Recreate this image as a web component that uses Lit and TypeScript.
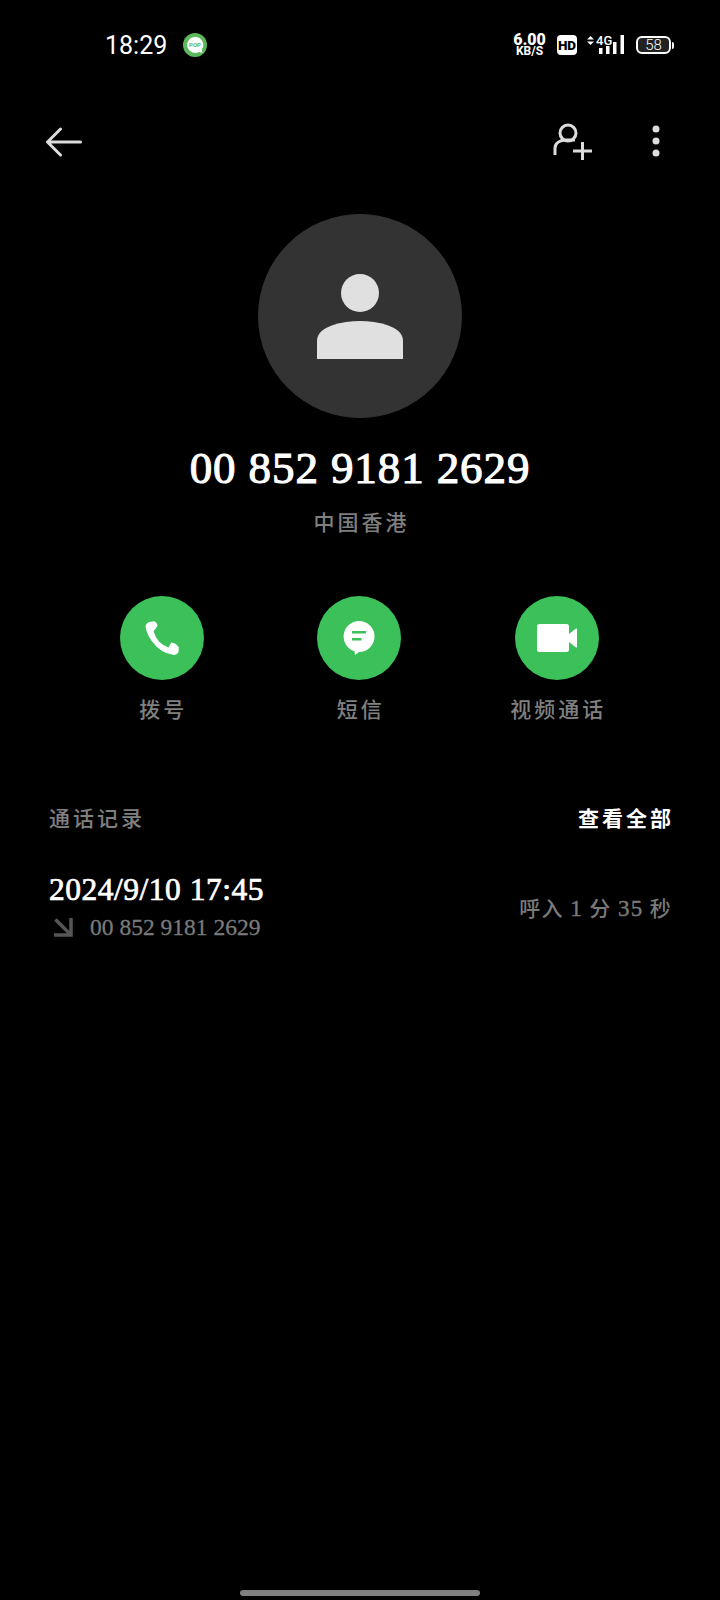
import { LitElement, css, html } from "lit";
import { customElement } from "lit/decorators.js";

@customElement("app-root")
export class AppRoot extends LitElement {
  static styles = css`
    :host {
      display: flex;
      flex-direction: column;
      width: 720px;
      height: 1600px;
      background: #000;
      color: #fff;
      font-family: "Liberation Serif", "Noto Sans CJK SC", serif;
      overflow: hidden;
    }

    svg {
      display: block;
      flex: none;
    }

    /* status bar */
    .status {
      display: flex;
      align-items: center;
      height: 90px;
      padding: 0 46px 0 105px;
      box-sizing: border-box;
      font-family: Roboto, sans-serif;
    }
    .time {
      font-size: 25px;
      font-weight: 400;
    }
    .pop {
      margin-left: 16px;
    }
    .status-right {
      display: flex;
      align-items: center;
      margin-left: auto;
    }
    .speed {
      display: flex;
      flex-direction: column;
      align-items: center;
      width: 35px;
      font-size: 12px;
      font-weight: 700;
      line-height: 11px;
    }
    .speed b {
      font-size: 16px;
      line-height: 12px;
    }
    .hd {
      width: 20px;
      height: 20px;
      margin-left: 10px;
      border-radius: 4px;
      background: #fff;
      color: #000;
      font-size: 13.500px;
      font-weight: 900;
      line-height: 20px;
      text-align: center;
    }
    .signal {
      margin-left: 10px;
    }
    .battery {
      display: flex;
      align-items: center;
      margin-left: 11px;
    }
    .battery-body {
      width: 31px;
      height: 14px;
      border: 2px solid #fff;
      border-radius: 6px;
      background: #222;
      font-size: 15px;
      font-weight: 300;
      line-height: 14px;
      text-align: center;
    }
    .battery-nub {
      width: 2px;
      height: 7px;
      margin-left: 1px;
      border-radius: 0 2px 2px 0;
      background: #fff;
    }

    /* top navigation */
    .nav {
      display: flex;
      align-items: center;
      height: 46px;
      margin-top: 28px;
      padding: 0 60px 0 45px;
    }
    .nav-back {
      margin-top: 2px;
    }
    .nav-right {
      display: flex;
      align-items: center;
      gap: 59px;
      margin-left: auto;
    }

    /* contact header */
    .avatar {
      display: flex;
      align-items: center;
      justify-content: center;
      width: 204px;
      height: 204px;
      margin: 50px auto 0;
      border-radius: 50%;
      background: #333;
    }
    .number {
      margin-top: 22px;
      font-size: 45px;
      line-height: 56px;
      letter-spacing: 0.9px;
      text-align: center;
      -webkit-text-stroke: 1.100px #fff;
    }
    .region {
      margin-top: 12px;
      padding-left: 3px;
      color: #7f7f7f;
      font-size: 21px;
      font-weight: 500;
      line-height: 30px;
      letter-spacing: 3px;
      text-align: center;
    }

    /* call / message / video actions */
    .actions {
      display: grid;
      grid-template-columns: repeat(3, 197.500px);
      margin-top: 58px;
      padding-left: 63px;
    }
    .action {
      display: flex;
      flex-direction: column;
      align-items: center;
      gap: 15px;
    }
    .circle {
      display: flex;
      align-items: center;
      justify-content: center;
      width: 84px;
      height: 84px;
      border-radius: 50%;
      background: #3cc05a;
    }
    .label {
      margin-right: -3px;
      color: #808080;
      font-size: 21px;
      font-weight: 500;
      line-height: 30px;
      letter-spacing: 3px;
    }

    /* call log */
    .log-head {
      display: flex;
      justify-content: space-between;
      margin-top: 79px;
      padding: 0 46px 0 49px;
      font-size: 21px;
      font-weight: 500;
      line-height: 30px;
      letter-spacing: 3px;
    }
    .log-title {
      color: #808080;
    }
    .log-all {
      font-weight: 700;
    }
    .log-row {
      display: flex;
      justify-content: space-between;
      margin-top: 36px;
      padding: 0 48px 0 49px;
    }
    .log-date {
      font-size: 31.500px;
      line-height: 40px;
      letter-spacing: 0.5px;
      -webkit-text-stroke: 0.7px #fff;
    }
    .log-sub {
      display: flex;
      align-items: center;
      margin-top: 2px;
      padding-left: 5px;
      color: #7a7a7a;
      font-size: 23.500px;
      line-height: 30px;
      -webkit-text-stroke: 0.3px #7a7a7a;
    }
    .log-sub svg {
      margin-right: 17px;
    }
    .log-meta {
      padding-top: 19px;
      color: #7a7a7a;
      font-size: 21px;
      font-weight: 500;
      line-height: 40px;
      letter-spacing: 1.200px;
    }
    .log-meta .num {
      font-size: 23px;
      -webkit-text-stroke: 0.4px #7a7a7a;
    }

    .home-bar {
      width: 240px;
      height: 6px;
      margin: auto auto 4px;
      border-radius: 3px;
      background: #808080;
    }
  `;

  private renderStatus() {
    return html`
      <div class="status">
        <span class="time">18:29</span>
        <svg class="pop" width="24" height="24" viewBox="0 0 24 24">
          <circle cx="12" cy="12" r="12" fill="#5cb85c" />
          <path d="M12 4a8 8 0 1 0 4 15l3.600.8-1-3A8 8 0 0 0 12 4z" fill="#fff" />
          <text x="12" y="14" text-anchor="middle" font-size="6" font-weight="700" fill="#5cb85c">POP</text>
        </svg>
        <div class="status-right">
          <div class="speed"><b>6.00</b><span>KB/S</span></div>
          <div class="hd">HD</div>
          <svg class="signal" width="38" height="26" viewBox="0 -3 38 26" fill="#fff">
            <path d="M3.500 1L7 4.500H0zM3.500 10L0 6.500H7z" />
            <text x="9" y="9.500" font-size="13" font-weight="500">4G</text>
            <rect x="12" y="13" width="3.500" height="6" />
            <rect x="19" y="11" width="3.500" height="8" />
            <rect x="26" y="7" width="3.500" height="12" />
            <rect x="33.500" y="0" width="3.500" height="19" />
          </svg>
          <div class="battery">
            <div class="battery-body">58</div>
            <div class="battery-nub"></div>
          </div>
        </div>
      </div>
    `;
  }

  private renderNav() {
    return html`
      <div class="nav">
        <svg class="nav-back" width="38" height="30" viewBox="0 0 38 30" fill="none" stroke="#dcdcdc" stroke-width="3" stroke-linecap="round" stroke-linejoin="round">
          <path d="M15.500 2L2.500 15L15.500 28M3 15H35.500" />
        </svg>
        <div class="nav-right">
          <svg width="40" height="38" viewBox="0 0 40 38" fill="none" stroke="#dcdcdc" stroke-width="3">
            <circle cx="15" cy="11" r="8" />
            <path d="M2 33V26C2 21 7 18 13 18H22" />
            <path d="M20 29H39M29.500 20V38" />
          </svg>
          <svg width="8" height="32" viewBox="0 0 8 32" fill="#dcdcdc">
            <circle cx="4" cy="4" r="3.500" />
            <circle cx="4" cy="16" r="3.500" />
            <circle cx="4" cy="28" r="3.500" />
          </svg>
        </div>
      </div>
    `;
  }

  render() {
    return html`
      ${this.renderStatus()} ${this.renderNav()}
      <div class="avatar">
        <svg width="86" height="85" viewBox="0 0 86 85" fill="#e0e0e0">
          <circle cx="43" cy="19" r="19" />
          <path d="M0 85V67C0 58 8 54 16 51C24 48.500 34 47 43 47C52 47 62 48.500 70 51C78 54 86 58 86 67V85z" />
        </svg>
      </div>
      <div class="number">00 852 9181 2629</div>
      <div class="region">中国香港</div>

      <div class="actions">
        <div class="action">
          <div class="circle">
            <svg width="34" height="34" viewBox="0 0 100 101" fill="#fff">
              <path d="M12 3L28 1Q36 6 37 14L25 31Q31 49 41 61Q53 73 69 79L78 64Q92 66 100 78L99 92Q95 101 85 101Q45 95 20 60Q2 35 1 14Q3 6 12 3Z" />
            </svg>
          </div>
          <span class="label">拨号</span>
        </div>
        <div class="action">
          <div class="circle">
            <svg width="32" height="34" viewBox="0 0 32 34">
              <path d="M16 0a15.500 15.500 0 1 1 0 31l-4 3-.5-3.700A15.500 15.500 0 0 1 16 0z" fill="#fff" />
              <path d="M9 10h14v2.500H9zM9 17h9.500v2.500H9z" fill="#3cc05a" />
            </svg>
          </div>
          <span class="label">短信</span>
        </div>
        <div class="action">
          <div class="circle">
            <svg width="40" height="28" viewBox="0 0 40 28" fill="#fff">
              <rect x="0" y="0" width="32" height="28" rx="2.500" />
              <path d="M32 10L39 4.500Q40 4 40 5.500V22.500Q40 24 39 23.500L32 18z" />
            </svg>
          </div>
          <span class="label">视频通话</span>
        </div>
      </div>

      <div class="log-head">
        <span class="log-title">通话记录</span>
        <span class="log-all">查看全部</span>
      </div>
      <div class="log-row">
        <div>
          <div class="log-date">2024/9/10 17:45</div>
          <div class="log-sub">
            <svg width="19" height="19" viewBox="0 0 19 19" fill="none" stroke="#555" stroke-width="3.500">
              <path d="M1.500 1.500L16 16M0 17H17V0" />
            </svg>
            00 852 9181 2629
          </div>
        </div>
        <div class="log-meta">呼入 <span class="num">1</span> 分 <span class="num">35</span> 秒</div>
      </div>
      <div class="home-bar"></div>
    `;
  }
}
